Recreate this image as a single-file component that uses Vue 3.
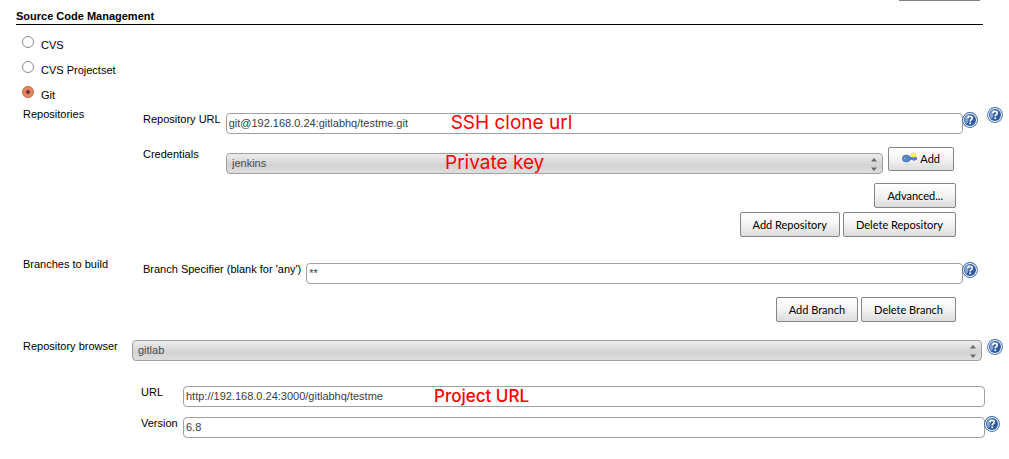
<script setup>
import { ref, h } from 'vue'

const scm = ref('git')
const scmOptions = [
  { value: 'cvs', label: 'CVS' },
  { value: 'projectset', label: 'CVS Projectset' },
  { value: 'git', label: 'Git' },
]
const repositoryUrl = ref('git@192.168.0.24:gitlabhq/testme.git')
const credentials = ref('jenkins')
const branch = ref('**')
const browser = ref('gitlab')
const browserUrl = ref('http://192.168.0.24:3000/gitlabhq/testme')
const version = ref('6.8')

const HelpIcon = () =>
  h('svg', { width: 16, height: 16, viewBox: '0 0 16 16', 'aria-hidden': 'true' }, [
    h('circle', { cx: 8, cy: 8, r: 7.9, fill: '#3c66a6' }),
    h('circle', { cx: 8, cy: 8, r: 7, fill: '#f2f6fb' }),
    h('circle', { cx: 8, cy: 8, r: 6, fill: '#2f5b9f' }),
    h('path', { d: 'M2.6 8A5.4 5.4 0 0 1 8 2.6Q6 5 6.3 9Q5.6 12 4.6 12.2Q2.6 10.4 2.6 8Z', fill: '#7ea1d0' }),
    h('path', { d: 'M5.9 6.2Q5.9 4.4 8 4.4Q10.2 4.4 10.2 6Q10.2 7.1 9.1 7.7Q8.2 8.2 8.2 9.4', fill: 'none', stroke: '#fff', 'stroke-width': 1.6 }),
    h('rect', { x: 7.3, y: 10.4, width: 1.8, height: 1.7, fill: '#fff' }),
  ])

const Arrows = () =>
  h('svg', { width: 6, height: 13, viewBox: '0 0 6 13', 'aria-hidden': 'true' }, [
    h('path', { d: 'M0 3.5L3 0L6 3.5ZM0 9.5L3 13L6 9.5Z', fill: '#666' }),
  ])
</script>

<template>
  <main class="page">
    <div class="edge"></div>
    <h2 class="title">Source Code Management</h2>

    <div class="radios" role="radiogroup" aria-label="Source Code Management">
      <label v-for="o in scmOptions" :key="o.value" class="radio">
        <input v-model="scm" type="radio" name="scm" :value="o.value" />
        <span>{{ o.label }}</span>
      </label>
    </div>

    <section class="section repositories">
      <span class="name">Repositories</span>
      <div class="content">
        <div class="row">
          <label for="repo-url">Repository URL</label>
          <div class="field">
            <input id="repo-url" v-model="repositoryUrl" type="text" />
            <span class="note note-ssh">SSH clone url</span>
          </div>
          <button class="help" type="button" aria-label="Help for Repository URL"><HelpIcon /></button>
        </div>
        <div class="row credentials">
          <label for="credentials">Credentials</label>
          <div class="field">
            <select id="credentials" v-model="credentials"><option>jenkins</option></select>
            <span class="arrows"><Arrows /></span>
            <span class="note note-key">Private key</span>
          </div>
          <button class="btn add" type="button">
            <svg width="16" height="14" viewBox="0 0 16 14" aria-hidden="true">
              <ellipse cx="7" cy="12.6" rx="5" ry=".8" fill="#ddd" />
              <path d="M7 5.2H14.5V8H13.6V7.2H12.4V8.4H11.2V7.4H8Z" fill="#4d7fc0" stroke="#315f9e" stroke-width=".5" />
              <ellipse cx="4.3" cy="6.5" rx="4" ry="3.5" fill="#5488c9" stroke="#3766a8" stroke-width=".6" />
              <circle cx="2.6" cy="6.2" r=".7" fill="#9dbbe0" />
              <path d="M11.6 0L12.5 1.3L14 .7L13.7 2.2L15 3L13.7 3.8L14 5.3L12.5 4.7L11.6 6L10.7 4.7L9.2 5.3L9.5 3.8L8.2 3L9.5 2.2L9.2 .7L10.7 1.3Z" fill="#f7e83c" />
              <circle cx="11.6" cy="3" r="1" fill="#fffcc0" />
            </svg>
            Add
          </button>
        </div>
        <div class="actions advanced"><button class="btn" type="button">Advanced...</button></div>
        <div class="actions repo-actions">
          <button class="btn" type="button">Add Repository</button>
          <button class="btn" type="button">Delete Repository</button>
        </div>
      </div>
      <button class="help" type="button" aria-label="Help for Repositories"><HelpIcon /></button>
    </section>

    <section class="section branches">
      <span class="name">Branches to build</span>
      <div class="content">
        <div class="row">
          <label for="branch">Branch Specifier (blank for 'any')</label>
          <div class="field"><input id="branch" v-model="branch" type="text" /></div>
          <button class="help" type="button" aria-label="Help for Branch Specifier"><HelpIcon /></button>
        </div>
        <div class="actions branch-actions">
          <button class="btn" type="button">Add Branch</button>
          <button class="btn" type="button">Delete Branch</button>
        </div>
      </div>
    </section>

    <section class="section browser">
      <label class="name" for="browser">Repository browser</label>
      <div class="field">
        <select id="browser" v-model="browser"><option>gitlab</option></select>
        <span class="arrows"><Arrows /></span>
      </div>
      <button class="help" type="button" aria-label="Help for Repository browser"><HelpIcon /></button>
    </section>

    <section class="details">
      <div class="row">
        <label for="url">URL</label>
        <div class="field">
          <input id="url" v-model="browserUrl" type="text" />
          <span class="note note-project">Project URL</span>
        </div>
      </div>
      <div class="row">
        <label for="version">Version</label>
        <div class="field"><input id="version" v-model="version" type="text" /></div>
        <button class="help" type="button" aria-label="Help for Version"><HelpIcon /></button>
      </div>
    </section>
  </main>
</template>

<style>
body {
  background: #fff;
}
</style>

<style scoped>
.page {
  font: 11px/14px "Liberation Sans", Arial, sans-serif;
  color: #000;
  padding-bottom: 20px;
}
.page * {
  box-sizing: border-box;
}
.edge {
  width: 81px;
  height: 1px;
  margin: 0 29px 0 auto;
  background: #808080;
}
.title {
  margin: 0 26px 7px 16px;
  padding: 8px 0 1px;
  border-bottom: 1px solid #000;
  font-size: 11px;
  line-height: 14px;
  font-weight: bold;
}
.radios {
  margin-left: 22px;
}
.radio {
  display: flex;
  align-items: flex-start;
  gap: 7px;
  height: 25px;
  padding-top: 4px;
}
.radio span {
  padding-top: 2px;
}
.radio input {
  appearance: none;
  width: 12px;
  height: 12px;
  margin: 0;
  border: 1px solid #8c8c8c;
  border-radius: 50%;
  background: #fff;
}
.radio input:checked {
  border-color: #b5603f;
  background: radial-gradient(circle, #5e3a2c 0 1px, #f08763 3px);
}
.section {
  display: flex;
  align-items: flex-start;
  margin: 0 6px 0 23px;
}
.name {
  flex: none;
  width: 120px;
}
.content {
  flex: 1;
  padding: 5px 9px 0 0;
}
.branches .content {
  padding-right: 25px;
}
.browser .name {
  width: 109px;
}
.browser .field {
  margin: 1px 5px 0 0;
}
.row {
  display: flex;
  align-items: flex-start;
}
.row .field {
  margin: 1px 0 0 5px;
}
.field {
  position: relative;
  flex: 1;
  height: 21px;
}
.field input,
.field select {
  display: block;
  appearance: none;
  width: 100%;
  height: 21px;
  margin: 0;
  padding: 0 2px 2px;
  border: 1px solid #a0a0a0;
  border-radius: 4px;
  background: #fff;
  color: #3c3c3c;
  font: inherit;
}
.field select {
  padding: 0 5px 2px;
  background: linear-gradient(#ececec, #d2d2d2 60%, #dedede);
  color: #4c4c4c;
}
.arrows {
  position: absolute;
  top: 5px;
  right: 6px;
  line-height: 0;
  pointer-events: none;
}
.help {
  flex: none;
  width: 16px;
  height: 16px;
  margin: 0;
  padding: 0;
  border: 0;
  background: none;
  line-height: 0;
}
.row .help {
  margin-left: -1px;
  z-index: 1;
}
.credentials {
  margin: 13px 24px 0 0;
}
.credentials label {
  width: 78px;
}
.credentials .field {
  margin-top: 6px;
}
.btn {
  height: 25px;
  padding: 0 12px;
  border: 1px solid #858585;
  border-radius: 2px;
  background: linear-gradient(#fff, #f5f5f5 45%, #dcdcdc);
  color: #000;
  font: 11px/14px Lato, sans-serif;
  white-space: nowrap;
}
.add {
  display: flex;
  align-items: center;
  gap: 2px;
  height: 24px;
  padding: 0 13px;
  margin-left: 5px;
}
.actions {
  display: flex;
  justify-content: flex-end;
  gap: 3px;
  padding-right: 22px;
}
.advanced {
  margin-top: 9px;
}
.repo-actions {
  margin: 4px 0 20px;
}
.branch-actions {
  margin: 13px 0 17px;
}
.details {
  display: grid;
  gap: 9px;
  margin: 24px 9px 0 141px;
}
.details label {
  width: 42px;
}
.details .field {
  flex: none;
  width: calc(100% - 57px);
  margin-left: 0;
}
.note {
  position: absolute;
  top: -1px;
  font: 19px/21px Inter, sans-serif;
  color: #f00;
  white-space: nowrap;
  pointer-events: none;
}
.note-ssh {
  left: 225px;
}
.note-key {
  left: 219px;
}
.note-project {
  top: 0;
  left: 251px;
  font-size: 17px;
  font-weight: 500;
}
</style>
